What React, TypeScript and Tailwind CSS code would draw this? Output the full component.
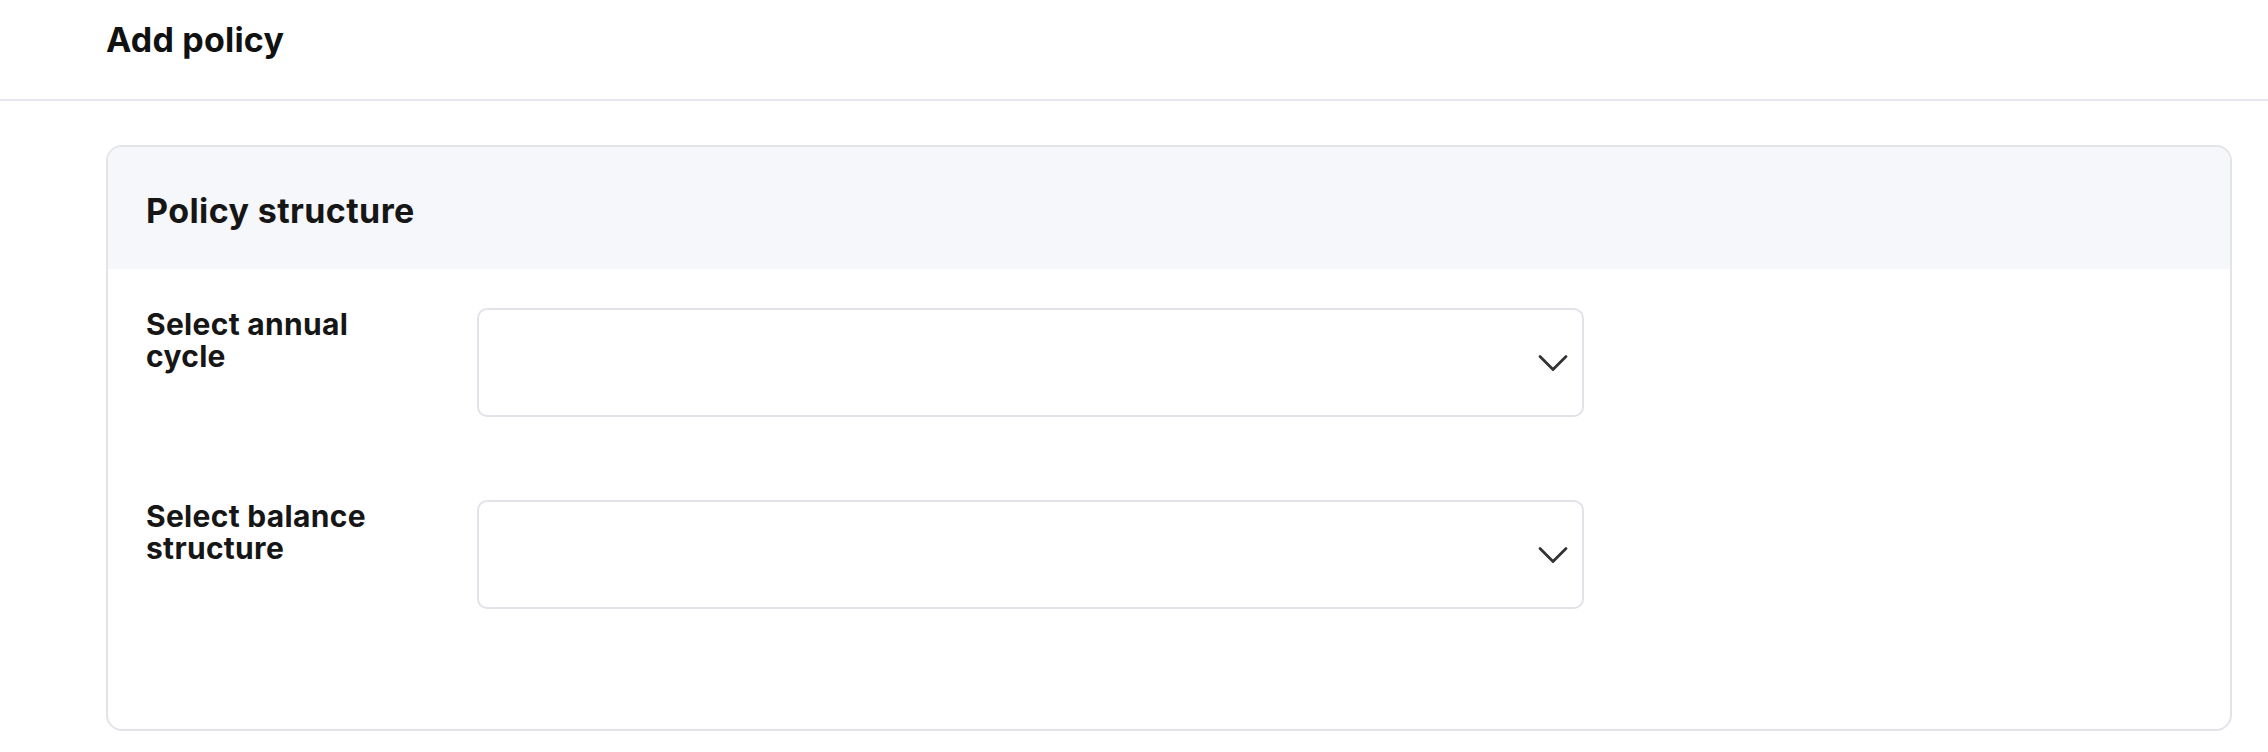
import { ChevronDown } from "lucide-react";

const font = { fontFamily: "Inter, 'Liberation Sans', sans-serif" };

function SelectField({ label }: { label: string }) {
  return (
    <div className="flex items-start">
      <div className="w-[331px] shrink-0">
        <p className="max-w-[260px] text-[30px] font-bold leading-[32px] tracking-[0.3px] text-[#161616]">
          {label}
        </p>
      </div>
      <button
        type="button"
        className="flex h-[109px] w-[1107px] items-center justify-end rounded-[10px] border-2 border-[#e2e3e9] bg-white pr-[3px]"
      >
        <ChevronDown className="h-[52px] w-[52px] text-[#333333]" strokeWidth={1.3} />
      </button>
    </div>
  );
}

export default function App() {
  return (
    <div className="min-h-screen w-full bg-white" style={font}>
      {/* Page header */}
      <header className="h-[101px] border-b-2 border-[#e6e7eb] pl-[106px] pt-[20px]">
        <h1 className="text-[34px] font-bold leading-[40px] tracking-[0.2px] text-[#111111]">
          Add policy
        </h1>
      </header>

      {/* Policy structure card */}
      <div className="pl-[106px] pr-[36px] pt-[44px]">
        <section className="overflow-hidden rounded-[16px] border-2 border-[#e3e4ea]">
          <div className="flex h-[122px] items-center bg-[#f6f7fa] pl-[38px] pt-[5px]">
            <h2 className="text-[34px] font-bold leading-[40px] tracking-[0.4px] text-[#161616]">
              Policy structure
            </h2>
          </div>
          <div className="flex flex-col gap-[83px] pb-[120px] pl-[38px] pt-[39px]">
            <SelectField label="Select annual cycle" />
            <SelectField label="Select balance structure" />
          </div>
        </section>
      </div>
    </div>
  );
}
